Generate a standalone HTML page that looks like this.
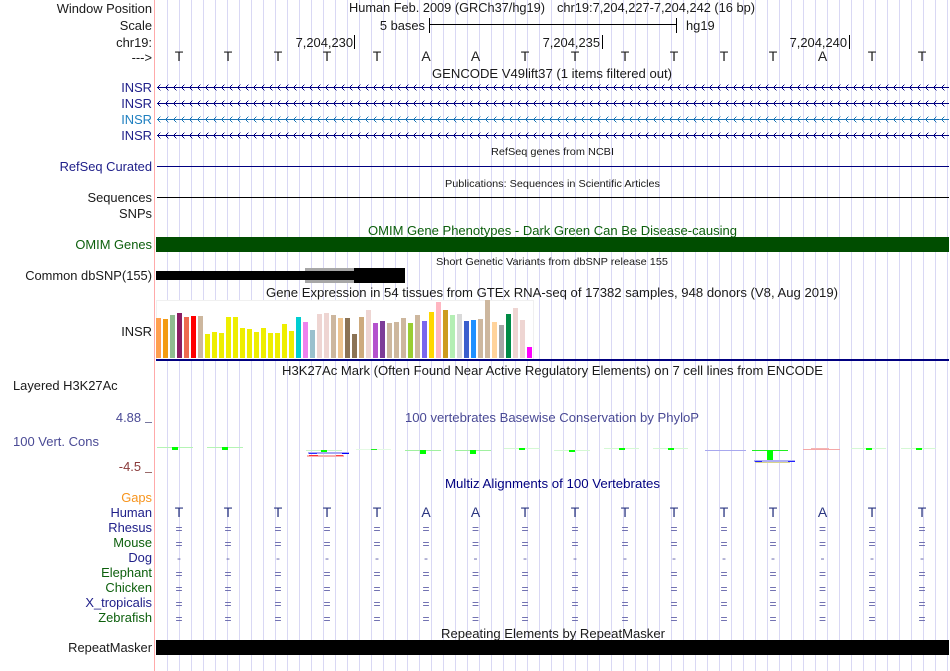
<!DOCTYPE html>
<html><head><meta charset="utf-8"><title>Genome Browser</title>
<style>
html,body{margin:0;padding:0;background:#fff;width:950px;height:671px;overflow:hidden}
svg{display:block}
text{font-family:"Liberation Sans",sans-serif;font-size:12.9px;fill:#1a1a1a}
.e{text-anchor:end}
.n{fill:#20208a}
.g{fill:#0c5f0c}
.b{font-size:14px;text-anchor:middle;fill:#222}
.h{font-size:14px;text-anchor:middle;fill:#2a3580}
.q{font-size:12px;text-anchor:middle;fill:#6060a8}
.s{font-size:10.4px}
</style></head><body>
<svg width="950" height="671" viewBox="0 0 950 671" xmlns="http://www.w3.org/2000/svg" shape-rendering="crispEdges">
<rect width="950" height="671" fill="#fff"/>
<path stroke="#d9d8f4" stroke-width="1" fill="none" d="M167.5 0V671M179.5 0V671M191.5 0V671M203.5 0V671M215.5 0V671M227.5 0V671M239.5 0V671M251.5 0V671M263.5 0V671M275.5 0V671M287.5 0V671M299.5 0V671M311.5 0V671M323.5 0V671M335.5 0V671M347.5 0V671M359.5 0V671M371.5 0V671M383.5 0V671M395.5 0V671M407.5 0V671M419.5 0V671M431.5 0V671M443.5 0V671M455.5 0V671M467.5 0V671M479.5 0V671M491.5 0V671M503.5 0V671M515.5 0V671M527.5 0V671M539.5 0V671M551.5 0V671M563.5 0V671M575.5 0V671M587.5 0V671M599.5 0V671M611.5 0V671M623.5 0V671M635.5 0V671M647.5 0V671M659.5 0V671M671.5 0V671M683.5 0V671M695.5 0V671M707.5 0V671M719.5 0V671M731.5 0V671M743.5 0V671M755.5 0V671M767.5 0V671M779.5 0V671M791.5 0V671M803.5 0V671M815.5 0V671M827.5 0V671M839.5 0V671M851.5 0V671M863.5 0V671M875.5 0V671M887.5 0V671M899.5 0V671M911.5 0V671M923.5 0V671M935.5 0V671M947.5 0V671"/>
<rect x="154" width="1" height="671" fill="#ffaaaa"/>

<!-- left labels -->
<text x="152" y="13" class="e">Window Position</text>
<text x="152" y="30" class="e">Scale</text>
<text x="152" y="47" class="e">chr19:</text>
<text x="152" y="62" class="e">---&gt;</text>
<text x="152" y="92" class="e n">INSR</text>
<text x="152" y="108" class="e n">INSR</text>
<text x="152" y="124" class="e" style="fill:#1e7fc0">INSR</text>
<text x="152" y="140" class="e n">INSR</text>
<text x="152" y="171" class="e n">RefSeq Curated</text>
<text x="152" y="202" class="e">Sequences</text>
<text x="152" y="218" class="e">SNPs</text>
<text x="152" y="249" class="e g">OMIM Genes</text>
<text x="152" y="280" class="e">Common dbSNP(155)</text>
<text x="152" y="336" class="e">INSR</text>
<text x="13" y="390">Layered H3K27Ac</text>
<text x="141" y="422" class="e" style="fill:#4a4a95">4.88</text>
<text x="13" y="446" style="fill:#4a4a95" textLength="86" lengthAdjust="spacingAndGlyphs">100 Vert. Cons</text>
<text x="141" y="471" class="e" style="fill:#8a3a3a">-4.5</text>
<rect x="145" y="422" width="7" height="1" fill="#77779f"/>
<rect x="145" y="472" width="7" height="1" fill="#9a6a6a"/>
<text x="152" y="502" class="e" style="fill:#f7941d">Gaps</text>
<text x="152" y="517" class="e n">Human</text>
<text x="152" y="532" class="e n">Rhesus</text>
<text x="152" y="547" class="e g">Mouse</text>
<text x="152" y="562" class="e n">Dog</text>
<text x="152" y="577" class="e g">Elephant</text>
<text x="152" y="592" class="e g">Chicken</text>
<text x="152" y="607" class="e n">X_tropicalis</text>
<text x="152" y="622" class="e g">Zebrafish</text>
<text x="152" y="652" class="e">RepeatMasker</text>

<!-- header -->
<text x="349" y="12" textLength="196" lengthAdjust="spacingAndGlyphs">Human Feb. 2009 (GRCh37/hg19)</text>
<text x="557" y="12" textLength="198" lengthAdjust="spacingAndGlyphs">chr19:7,204,227-7,204,242 (16 bp)</text>
<text x="425" y="30" class="e">5 bases</text>
<rect x="429" y="18" width="1" height="15" fill="#000"/>
<rect x="429" y="24" width="248" height="1" fill="#000"/>
<rect x="676" y="18" width="1" height="15" fill="#000"/>
<text x="686" y="30">hg19</text>
<text x="353" y="47" class="e">7,204,230</text>
<rect x="354" y="35" width="1" height="14" fill="#000"/>
<text x="600" y="47" class="e">7,204,235</text>
<rect x="602" y="35" width="1" height="14" fill="#000"/>
<text x="847" y="47" class="e">7,204,240</text>
<rect x="849" y="35" width="1" height="14" fill="#000"/>

<!-- bases -->
<text x="179" y="61" class="b">T</text><text x="228" y="61" class="b">T</text><text x="278" y="61" class="b">T</text><text x="327" y="61" class="b">T</text><text x="377" y="61" class="b">T</text><text x="426" y="61" class="b">A</text><text x="475.5" y="61" class="b">A</text><text x="525" y="61" class="b">T</text><text x="575" y="61" class="b">T</text><text x="625" y="61" class="b">T</text><text x="674" y="61" class="b">T</text><text x="724" y="61" class="b">T</text><text x="773" y="61" class="b">T</text><text x="822.5" y="61" class="b">A</text><text x="872" y="61" class="b">T</text><text x="922" y="61" class="b">T</text>

<!-- titles -->
<text x="432" y="78" textLength="240" lengthAdjust="spacingAndGlyphs">GENCODE V49lift37 (1 items filtered out)</text>
<text x="491" y="155" class="s" textLength="123" lengthAdjust="spacingAndGlyphs">RefSeq genes from NCBI</text>
<text x="445" y="187" class="s" textLength="215" lengthAdjust="spacingAndGlyphs">Publications: Sequences in Scientific Articles</text>
<text x="368" y="235" class="g" textLength="369" lengthAdjust="spacingAndGlyphs">OMIM Gene Phenotypes - Dark Green Can Be Disease-causing</text>
<text x="436" y="265" class="s" textLength="232" lengthAdjust="spacingAndGlyphs">Short Genetic Variants from dbSNP release 155</text>
<text x="266" y="297" textLength="572" lengthAdjust="spacingAndGlyphs">Gene Expression in 54 tissues from GTEx RNA-seq of 17382 samples, 948 donors (V8, Aug 2019)</text>
<text x="282" y="375" textLength="541" lengthAdjust="spacingAndGlyphs">H3K27Ac Mark (Often Found Near Active Regulatory Elements) on 7 cell lines from ENCODE</text>
<text x="405" y="422" style="fill:#4a4a95" textLength="294" lengthAdjust="spacingAndGlyphs">100 vertebrates Basewise Conservation by PhyloP</text>
<text x="445" y="488" style="fill:#000080" textLength="215" lengthAdjust="spacingAndGlyphs">Multiz Alignments of 100 Vertebrates</text>
<text x="441" y="638" textLength="224" lengthAdjust="spacingAndGlyphs">Repeating Elements by RepeatMasker</text>

<!-- genes -->
<g fill="none" stroke="#000080" stroke-width="1">
<path d="M157 87.5H949M157 103.5H949M157 135.5H949"/>
<g stroke-dasharray="1 7">
<path d="M158 86.5H949M158 88.5H949M158 102.5H949M158 104.5H949M158 134.5H949M158 136.5H949"/>
<path d="M159 85.5H949M159 89.5H949M159 101.5H949M159 105.5H949M159 133.5H949M159 137.5H949"/>
</g>
<g stroke-dasharray="1 7" stroke-opacity=".4">
<path d="M160 84.5H949M160 90.5H949M160 100.5H949M160 106.5H949M160 132.5H949M160 138.5H949"/>
</g>
</g>
<g fill="none" stroke="#1b75b5" stroke-width="1">
<path d="M157 119.5H949"/>
<g stroke-dasharray="1 7"><path d="M158 118.5H949M158 120.5H949M159 117.5H949M159 121.5H949"/></g>
<g stroke-dasharray="1 7" stroke-opacity=".4"><path d="M160 116.5H949M160 122.5H949"/></g>
</g>
<rect x="157" y="166" width="792" height="1" fill="#000080"/>
<rect x="157" y="197" width="792" height="1" fill="#000"/>
<rect x="156" y="237" width="793" height="15" fill="#004d00"/>

<!-- dbSNP -->
<rect x="305" y="268" width="49" height="15" fill="#a6a6a6"/>
<rect x="156" y="271" width="198" height="9" fill="#000"/>
<rect x="354" y="268" width="51" height="15" fill="#000"/>

<!-- GTEx -->
<rect x="156" y="300" width="377" height="59" fill="#fff"/>
<rect x="156.5" y="300.5" width="377" height="59" fill="none" stroke="#f0f0f0"/>
<rect x="156" y="318" width="5" height="40" fill="#ff9f4f"/>
<rect x="163" y="319" width="5" height="39" fill="#f39c12"/>
<rect x="170" y="315" width="5" height="43" fill="#8fbc8f"/>
<rect x="177" y="313" width="5" height="45" fill="#8b1c62"/>
<rect x="184" y="317" width="5" height="41" fill="#ee6a50"/>
<rect x="191" y="316" width="5" height="42" fill="#ff0000"/>
<rect x="198" y="316" width="5" height="42" fill="#cdb79e"/>
<rect x="205" y="334" width="5" height="24" fill="#eeee00"/>
<rect x="212" y="332" width="5" height="26" fill="#eeee00"/>
<rect x="219" y="333" width="5" height="25" fill="#eeee00"/>
<rect x="226" y="317" width="5" height="41" fill="#eeee00"/>
<rect x="233" y="317" width="5" height="41" fill="#eeee00"/>
<rect x="240" y="328" width="5" height="30" fill="#eeee00"/>
<rect x="247" y="329" width="5" height="29" fill="#eeee00"/>
<rect x="254" y="332" width="5" height="26" fill="#eeee00"/>
<rect x="261" y="328" width="5" height="30" fill="#eeee00"/>
<rect x="268" y="333" width="5" height="25" fill="#eeee00"/>
<rect x="275" y="333" width="5" height="25" fill="#eeee00"/>
<rect x="282" y="324" width="5" height="34" fill="#eeee00"/>
<rect x="289" y="331" width="5" height="27" fill="#eeee00"/>
<rect x="296" y="317" width="5" height="41" fill="#00ced1"/>
<rect x="303" y="322" width="5" height="36" fill="#ee82ee"/>
<rect x="310" y="330" width="5" height="28" fill="#9ac0cd"/>
<rect x="317" y="314" width="5" height="44" fill="#eed5d2"/>
<rect x="324" y="313" width="5" height="45" fill="#eed5d2"/>
<rect x="331" y="315" width="5" height="43" fill="#cdb79e"/>
<rect x="338" y="318" width="5" height="40" fill="#eec591"/>
<rect x="345" y="318" width="5" height="40" fill="#8b7355"/>
<rect x="352" y="334" width="5" height="24" fill="#8b7355"/>
<rect x="359" y="317" width="5" height="41" fill="#cdaa7d"/>
<rect x="366" y="310" width="5" height="48" fill="#eed5d2"/>
<rect x="373" y="323" width="5" height="35" fill="#b452cd"/>
<rect x="380" y="321" width="5" height="37" fill="#7d3c98"/>
<rect x="387" y="323" width="5" height="35" fill="#cdb79e"/>
<rect x="394" y="322" width="5" height="36" fill="#cdb79e"/>
<rect x="401" y="318" width="5" height="40" fill="#cdb79e"/>
<rect x="408" y="323" width="5" height="35" fill="#9acd32"/>
<rect x="415" y="315" width="5" height="43" fill="#cdb79e"/>
<rect x="422" y="321" width="5" height="37" fill="#7a67ee"/>
<rect x="429" y="312" width="5" height="46" fill="#ffd700"/>
<rect x="436" y="302" width="5" height="56" fill="#ffb6c1"/>
<rect x="443" y="310" width="5" height="48" fill="#cd9b1d"/>
<rect x="450" y="315" width="5" height="43" fill="#b4eeb4"/>
<rect x="457" y="314" width="5" height="44" fill="#d9d9d9"/>
<rect x="464" y="321" width="5" height="37" fill="#3a5fcd"/>
<rect x="471" y="320" width="5" height="38" fill="#1e90ff"/>
<rect x="478" y="319" width="5" height="39" fill="#cdb79e"/>
<rect x="485" y="300" width="5" height="58" fill="#cdb79e"/>
<rect x="492" y="322" width="5" height="36" fill="#ffd39b"/>
<rect x="499" y="325" width="5" height="33" fill="#a6a6a6"/>
<rect x="506" y="314" width="5" height="44" fill="#008b45"/>
<rect x="513" y="308" width="5" height="50" fill="#eed5d2"/>
<rect x="520" y="320" width="5" height="38" fill="#eed5d2"/>
<rect x="527" y="347" width="5" height="11" fill="#ff00ff"/>
<rect x="156" y="359" width="793" height="2" fill="#000080"/>

<!-- conservation -->
<g>
<rect x="157" y="447" width="36" height="1" fill="#b4f4b4"/><rect x="172" y="447" width="6" height="3" fill="#00ff00"/>
<rect x="207" y="447" width="36" height="1" fill="#b4f4b4"/><rect x="222" y="447" width="6" height="3" fill="#00ff00"/>
<rect x="306" y="450" width="36" height="1" fill="#c8f4c8"/><rect x="321" y="450" width="6" height="2" fill="#00ff00"/>
<rect x="308" y="452" width="41" height="2" fill="#a8a8f4"/><rect x="309" y="453" width="8" height="1" fill="#3030ff"/><rect x="342" y="453" width="7" height="1" fill="#0000ff"/>
<rect x="307" y="455" width="37" height="2" fill="#f7b0b0"/><rect x="309" y="455" width="9" height="1" fill="#ff3030"/><rect x="336" y="455" width="7" height="1" fill="#ff4040"/>
<rect x="356" y="449" width="35" height="1" fill="#e4fae4"/><rect x="371" y="449" width="6" height="1" fill="#20f020"/>
<rect x="405" y="450" width="36" height="1" fill="#a0f0a0"/><rect x="420" y="450" width="6" height="4" fill="#00ff00"/>
<rect x="455" y="450" width="36" height="1" fill="#a0f0a0"/><rect x="470" y="450" width="6" height="4" fill="#00ff00"/>
<rect x="504" y="448" width="36" height="1" fill="#d4f8d4"/><rect x="519" y="448" width="6" height="2" fill="#00ff00"/>
<rect x="554" y="450" width="36" height="1" fill="#d4f8d4"/><rect x="569" y="450" width="6" height="2" fill="#00ff00"/>
<rect x="604" y="448" width="35" height="1" fill="#d4f8d4"/><rect x="619" y="448" width="6" height="2" fill="#00ff00"/>
<rect x="653" y="448" width="35" height="1" fill="#d4f8d4"/><rect x="668" y="448" width="6" height="2" fill="#00ff00"/>
<rect x="705" y="450" width="41" height="1" fill="#a8a8ee"/>
<rect x="752" y="450" width="36" height="1" fill="#20f020"/><rect x="767" y="450" width="6" height="10" fill="#00ff00"/>
<rect x="754" y="460" width="41" height="2" fill="#b0b0f4"/><rect x="755" y="461" width="7" height="1" fill="#2020ff"/><rect x="788" y="461" width="7" height="1" fill="#2020ff"/>
<rect x="755" y="462" width="35" height="1" fill="#d8d48c"/>
<rect x="803" y="449" width="37" height="1" fill="#f4a8a8"/><rect x="811" y="448" width="18" height="1" fill="#f4b4b4"/>
<rect x="851" y="448" width="35" height="1" fill="#d4f8d4"/><rect x="866" y="448" width="6" height="2" fill="#00ff00"/>
<rect x="901" y="448" width="35" height="1" fill="#d4f8d4"/><rect x="916" y="448" width="6" height="2" fill="#00ff00"/>
</g>

<!-- multiz -->
<text x="179" y="517" class="h">T</text><text x="228" y="517" class="h">T</text><text x="278" y="517" class="h">T</text><text x="327" y="517" class="h">T</text><text x="377" y="517" class="h">T</text><text x="426" y="517" class="h">A</text><text x="475.5" y="517" class="h">A</text><text x="525" y="517" class="h">T</text><text x="575" y="517" class="h">T</text><text x="625" y="517" class="h">T</text><text x="674" y="517" class="h">T</text><text x="724" y="517" class="h">T</text><text x="773" y="517" class="h">T</text><text x="822.5" y="517" class="h">A</text><text x="872" y="517" class="h">T</text><text x="922" y="517" class="h">T</text>
<text x="179" y="533" class="q">=</text><text x="228" y="533" class="q">=</text><text x="278" y="533" class="q">=</text><text x="327" y="533" class="q">=</text><text x="377" y="533" class="q">=</text><text x="426" y="533" class="q">=</text><text x="475.5" y="533" class="q">=</text><text x="525" y="533" class="q">=</text><text x="575" y="533" class="q">=</text><text x="625" y="533" class="q">=</text><text x="674" y="533" class="q">=</text><text x="724" y="533" class="q">=</text><text x="773" y="533" class="q">=</text><text x="822.5" y="533" class="q">=</text><text x="872" y="533" class="q">=</text><text x="922" y="533" class="q">=</text>
<text x="179" y="548" class="q">=</text><text x="228" y="548" class="q">=</text><text x="278" y="548" class="q">=</text><text x="327" y="548" class="q">=</text><text x="377" y="548" class="q">=</text><text x="426" y="548" class="q">=</text><text x="475.5" y="548" class="q">=</text><text x="525" y="548" class="q">=</text><text x="575" y="548" class="q">=</text><text x="625" y="548" class="q">=</text><text x="674" y="548" class="q">=</text><text x="724" y="548" class="q">=</text><text x="773" y="548" class="q">=</text><text x="822.5" y="548" class="q">=</text><text x="872" y="548" class="q">=</text><text x="922" y="548" class="q">=</text>
<text x="179" y="562" class="q">-</text><text x="228" y="562" class="q">-</text><text x="278" y="562" class="q">-</text><text x="327" y="562" class="q">-</text><text x="377" y="562" class="q">-</text><text x="426" y="562" class="q">-</text><text x="475.5" y="562" class="q">-</text><text x="525" y="562" class="q">-</text><text x="575" y="562" class="q">-</text><text x="625" y="562" class="q">-</text><text x="674" y="562" class="q">-</text><text x="724" y="562" class="q">-</text><text x="773" y="562" class="q">-</text><text x="822.5" y="562" class="q">-</text><text x="872" y="562" class="q">-</text><text x="922" y="562" class="q">-</text>
<text x="179" y="578" class="q">=</text><text x="228" y="578" class="q">=</text><text x="278" y="578" class="q">=</text><text x="327" y="578" class="q">=</text><text x="377" y="578" class="q">=</text><text x="426" y="578" class="q">=</text><text x="475.5" y="578" class="q">=</text><text x="525" y="578" class="q">=</text><text x="575" y="578" class="q">=</text><text x="625" y="578" class="q">=</text><text x="674" y="578" class="q">=</text><text x="724" y="578" class="q">=</text><text x="773" y="578" class="q">=</text><text x="822.5" y="578" class="q">=</text><text x="872" y="578" class="q">=</text><text x="922" y="578" class="q">=</text>
<text x="179" y="593" class="q">=</text><text x="228" y="593" class="q">=</text><text x="278" y="593" class="q">=</text><text x="327" y="593" class="q">=</text><text x="377" y="593" class="q">=</text><text x="426" y="593" class="q">=</text><text x="475.5" y="593" class="q">=</text><text x="525" y="593" class="q">=</text><text x="575" y="593" class="q">=</text><text x="625" y="593" class="q">=</text><text x="674" y="593" class="q">=</text><text x="724" y="593" class="q">=</text><text x="773" y="593" class="q">=</text><text x="822.5" y="593" class="q">=</text><text x="872" y="593" class="q">=</text><text x="922" y="593" class="q">=</text>
<text x="179" y="608" class="q">=</text><text x="228" y="608" class="q">=</text><text x="278" y="608" class="q">=</text><text x="327" y="608" class="q">=</text><text x="377" y="608" class="q">=</text><text x="426" y="608" class="q">=</text><text x="475.5" y="608" class="q">=</text><text x="525" y="608" class="q">=</text><text x="575" y="608" class="q">=</text><text x="625" y="608" class="q">=</text><text x="674" y="608" class="q">=</text><text x="724" y="608" class="q">=</text><text x="773" y="608" class="q">=</text><text x="822.5" y="608" class="q">=</text><text x="872" y="608" class="q">=</text><text x="922" y="608" class="q">=</text>
<text x="179" y="623" class="q">=</text><text x="228" y="623" class="q">=</text><text x="278" y="623" class="q">=</text><text x="327" y="623" class="q">=</text><text x="377" y="623" class="q">=</text><text x="426" y="623" class="q">=</text><text x="475.5" y="623" class="q">=</text><text x="525" y="623" class="q">=</text><text x="575" y="623" class="q">=</text><text x="625" y="623" class="q">=</text><text x="674" y="623" class="q">=</text><text x="724" y="623" class="q">=</text><text x="773" y="623" class="q">=</text><text x="822.5" y="623" class="q">=</text><text x="872" y="623" class="q">=</text><text x="922" y="623" class="q">=</text>

<!-- repeatmasker -->
<rect x="156" y="640" width="793" height="15" fill="#000"/>
</svg>
</body></html>
